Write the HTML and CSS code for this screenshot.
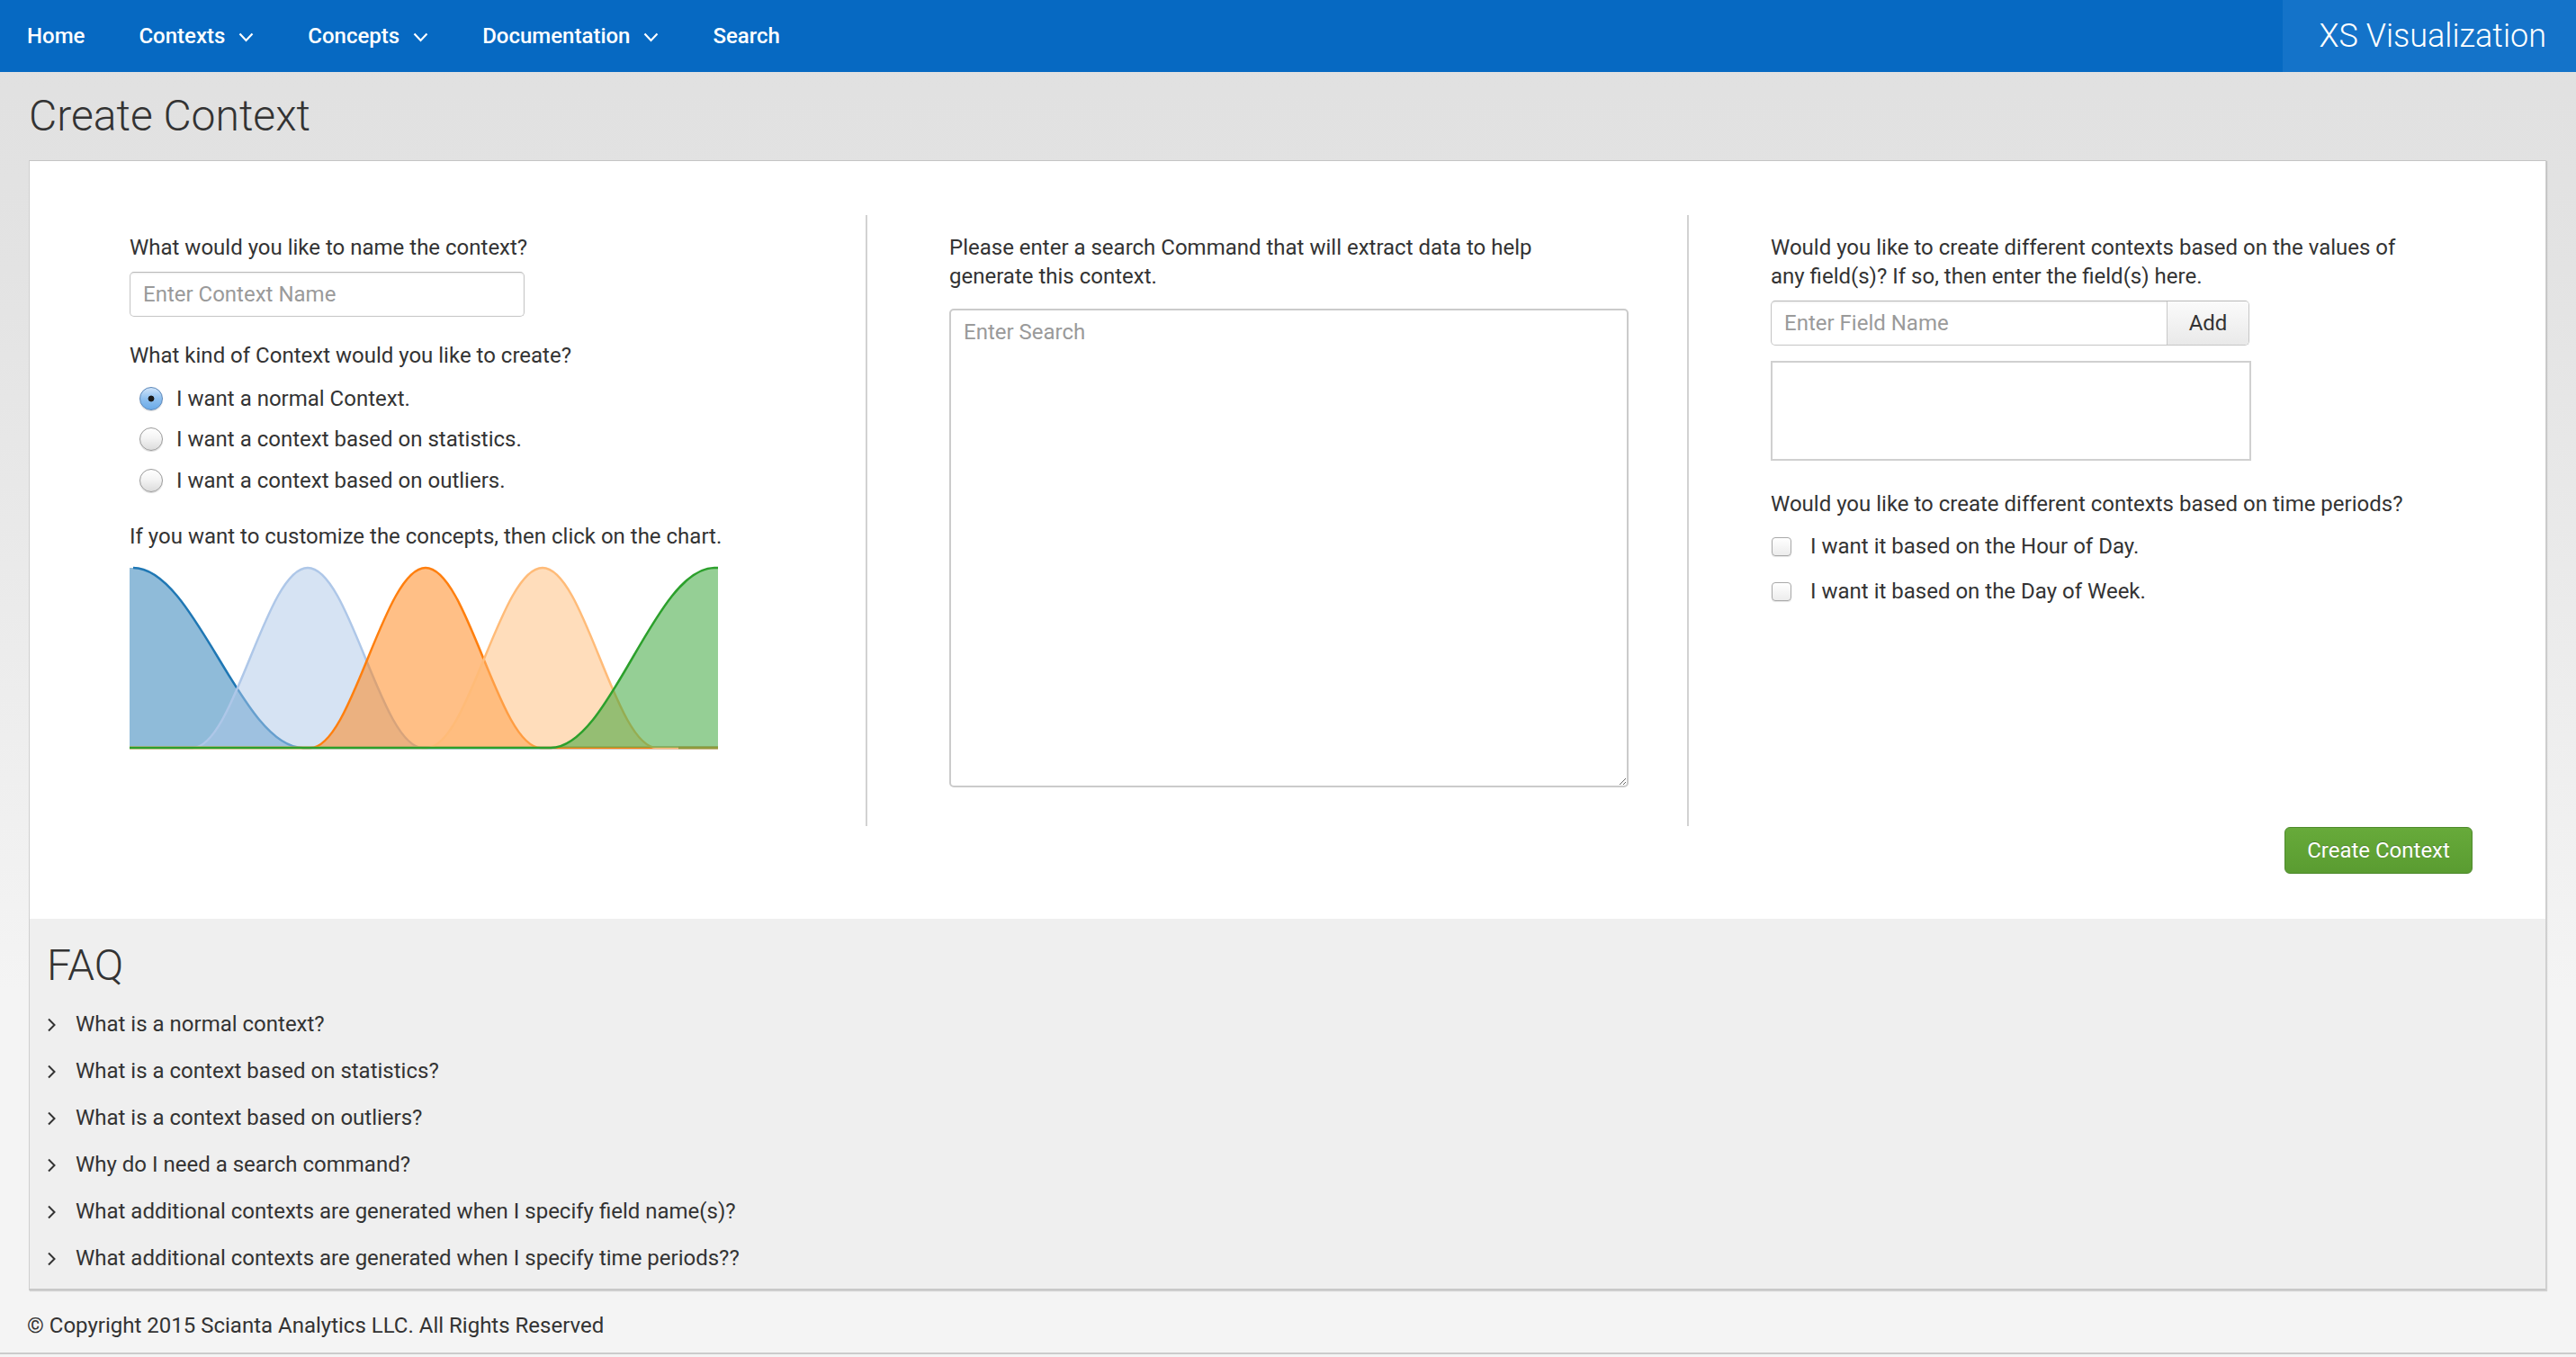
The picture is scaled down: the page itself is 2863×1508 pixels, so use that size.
FILE: index.html
```html
<!DOCTYPE html>
<html lang="en">
<head>
<meta charset="utf-8">
<title>Create Context</title>
<link rel="stylesheet" href="styles.css">
</head>
<body>
<header class="navbar">
  <nav class="nav">
    <a class="nav-item" href="#">Home</a>
    <a class="nav-item" href="#">Contexts<svg class="caret" width="17" height="11" viewBox="0 0 17 11"><polyline points="1.5,1.5 8.5,9 15.5,1.5" fill="none" stroke="#fff" stroke-width="2.2"/></svg></a>
    <a class="nav-item" href="#">Concepts<svg class="caret" width="17" height="11" viewBox="0 0 17 11"><polyline points="1.5,1.5 8.5,9 15.5,1.5" fill="none" stroke="#fff" stroke-width="2.2"/></svg></a>
    <a class="nav-item" href="#">Documentation<svg class="caret" width="17" height="11" viewBox="0 0 17 11"><polyline points="1.5,1.5 8.5,9 15.5,1.5" fill="none" stroke="#fff" stroke-width="2.2"/></svg></a>
    <a class="nav-item" href="#">Search</a>
  </nav>
  <div class="brand">XS Visualization</div>
</header>

<main class="page">
  <h1 class="page-title">Create Context</h1>

  <section class="card">
    <div class="card-main">
      <div class="cols">
        <div class="col col-first">
          <p class="label">What would you like to name the context?</p>
          <input class="text-input name-input" type="text" placeholder="Enter Context Name">
          <p class="label kind-label">What kind of Context would you like to create?</p>
          <label class="choice"><input class="radio" type="radio" name="kind" checked><span>I want a normal Context.</span></label>
          <label class="choice"><input class="radio" type="radio" name="kind"><span>I want a context based on statistics.</span></label>
          <label class="choice"><input class="radio" type="radio" name="kind"><span>I want a context based on outliers.</span></label>
          <p class="label chart-label">If you want to customize the concepts, then click on the chart.</p>
          <svg class="chart" width="654" height="200" viewBox="0 0 654 200">
            <path d="M0,200 L0,0 L4,0 C72.8,0 124.2,200 193,200 L654,200 Z" fill="rgba(31,119,180,0.5)"/>
            <path d="M4,0 C72.8,0 124.2,200 193,200 L654,200" fill="none" stroke="#1f77b4" stroke-width="2.5"/>
            <path d="M0,200 L70,200 C116.6,200 151.4,0 198,0 C244.6,0 279.4,200 326,200 L654,200 Z" fill="rgba(174,199,232,0.5)"/>
            <path d="M0,200 L70,200 C116.6,200 151.4,0 198,0 C244.6,0 279.4,200 326,200 L654,200" fill="none" stroke="#aec7e8" stroke-width="2.5"/>
            <path d="M0,200 L201,200 C247.6,200 282.4,0 329,0 C375.6,0 410.4,200 457,200 L654,200 Z" fill="rgba(255,127,14,0.5)"/>
            <path d="M0,200 L201,200 C247.6,200 282.4,0 329,0 C375.6,0 410.4,200 457,200 L654,200" fill="none" stroke="#ff7f0e" stroke-width="2.5"/>
            <path d="M0,200 L330,200 C377,200 412,0 459,0 C505.3,0 539.7,200 586,200 L654,200 Z" fill="rgba(255,187,120,0.5)"/>
            <path d="M0,200 L330,200 C377,200 412,0 459,0 C505.3,0 539.7,200 586,200 L654,200" fill="none" stroke="#ffbb78" stroke-width="2.5"/>
            <path d="M0,200 L468,200 C534.3,200 583.7,0 650,0 L654,0 L654,200 Z" fill="rgba(44,160,44,0.5)"/>
            <path d="M0,200 L468,200 C534.3,200 583.7,0 650,0 L654,0" fill="none" stroke="#2ca02c" stroke-width="2.5"/>
            <path d="M610,200 L654,200" fill="none" stroke="#8f9a3c" stroke-width="2.5"/>
          </svg>
        </div>

        <div class="col col-div">
          <p class="label">Please enter a search Command that will extract data to help generate this context.</p>
          <textarea class="search-area" placeholder="Enter Search"></textarea>
        </div>

        <div class="col col-div">
          <p class="label">Would you like to create different contexts based on the values of any field(s)? If so, then enter the field(s) here.</p>
          <div class="input-group">
            <input class="group-input" type="text" placeholder="Enter Field Name">
            <button class="add-btn" type="button">Add</button>
          </div>
          <div class="field-list"></div>
          <p class="label time-label">Would you like to create different contexts based on time periods?</p>
          <label class="check-row"><input class="checkbox" type="checkbox"><span>I want it based on the Hour of Day.</span></label>
          <label class="check-row"><input class="checkbox" type="checkbox"><span>I want it based on the Day of Week.</span></label>
        </div>
      </div>
      <div class="actions">
        <button class="create-btn" type="button">Create Context</button>
      </div>
    </div>

    <div class="faq">
      <h2 class="faq-title">FAQ</h2>
      <ul class="faq-list">
        <li class="faq-item"><svg class="chev" width="12" height="16" viewBox="0 0 12 16"><polyline points="2,1.5 8.5,8 2,14.5" fill="none" stroke="#333" stroke-width="2"/></svg>What is a normal context?</li>
        <li class="faq-item"><svg class="chev" width="12" height="16" viewBox="0 0 12 16"><polyline points="2,1.5 8.5,8 2,14.5" fill="none" stroke="#333" stroke-width="2"/></svg>What is a context based on statistics?</li>
        <li class="faq-item"><svg class="chev" width="12" height="16" viewBox="0 0 12 16"><polyline points="2,1.5 8.5,8 2,14.5" fill="none" stroke="#333" stroke-width="2"/></svg>What is a context based on outliers?</li>
        <li class="faq-item"><svg class="chev" width="12" height="16" viewBox="0 0 12 16"><polyline points="2,1.5 8.5,8 2,14.5" fill="none" stroke="#333" stroke-width="2"/></svg>Why do I need a search command?</li>
        <li class="faq-item"><svg class="chev" width="12" height="16" viewBox="0 0 12 16"><polyline points="2,1.5 8.5,8 2,14.5" fill="none" stroke="#333" stroke-width="2"/></svg>What additional contexts are generated when I specify field name(s)?</li>
        <li class="faq-item"><svg class="chev" width="12" height="16" viewBox="0 0 12 16"><polyline points="2,1.5 8.5,8 2,14.5" fill="none" stroke="#333" stroke-width="2"/></svg>What additional contexts are generated when I specify time periods??</li>
      </ul>
    </div>
  </section>
</main>

<footer class="footer">© Copyright 2015 Scianta Analytics LLC. All Rights Reserved</footer>
</body>
</html>
```

FILE: styles.css
```css
* { box-sizing: border-box; }

html, body {
  margin: 0;
  padding: 0;
}

body {
  font-family: Roboto, "Noto Sans", "Liberation Sans", sans-serif;
  font-size: 24px;
  line-height: 32px;
  color: #333;
  background: linear-gradient(to bottom, #e0e0e0 0px, #e3e3e3 300px, #f4f4f4 1100px, #f4f4f4 100%);
  min-height: 1508px;
}

/* ---------- navbar ---------- */
.navbar {
  display: flex;
  height: 80px;
  background: #0669c2;
}

.nav {
  display: flex;
  align-items: center;
  padding-left: 0;
}

.nav-item {
  display: flex;
  align-items: center;
  height: 80px;
  padding: 0 30px 0 30px;
  color: #fff;
  text-decoration: none;
  font-size: 24px;
  font-weight: 500;
}

.caret {
  margin-left: 15px;
  margin-top: 3px;
}

.brand {
  margin-left: auto;
  width: 326px;
  height: 80px;
  background: #1473c9;
  color: #fff;
  font-size: 36px;
  font-weight: 300;
  line-height: 80px;
  text-align: right;
  padding-right: 33px;
}

/* ---------- page ---------- */
.page {
  padding: 0 33px 0 32px;
}

.page-title {
  margin: 0;
  padding: 22px 0 22px 0;
  font-size: 48px;
  line-height: 54px;
  font-weight: 300;
  color: #333;
}

.card {
  background: #fff;
  border: 1px solid #cfcfcf;
  border-top-color: #c4c4c4;
  border-bottom: 2px solid #c8c8c8;
  box-shadow: 1px 1px 1px rgba(0, 0, 0, 0.14);
}

.card-main {
  padding: 60px 0 50px 18px;
}

.cols {
  display: grid;
  grid-template-columns: 911px 913px 913px;
}

.col {
  padding: 20px 95px 43px 93px;
}

.col-div {
  border-left: 2px solid #d2d2d2;
  padding-left: 91px;
}

.label {
  margin: 0;
}

.text-input,
.search-area,
.group-input {
  font-family: Roboto, "Noto Sans", "Liberation Sans", sans-serif;
  font-size: 24px;
  color: #333;
}

.text-input::placeholder,
.search-area::placeholder,
.group-input::placeholder {
  color: #9a9a9a;
}

.name-input {
  display: block;
  margin-top: 11px;
  width: 439px;
  height: 50px;
  padding: 0 14px;
  border: 1px solid #c6c6c6;
  border-top-color: #b9b9b9;
  border-radius: 5px;
  box-shadow: inset 0 1px 2px rgba(0, 0, 0, 0.08);
  outline: none;
}

.kind-label {
  margin-top: 27px;
}

.choice {
  display: flex;
  align-items: center;
  height: 45.5px;
  padding-left: 11px;
}

.choice:first-of-type {
  margin-top: 9px;
}

.choice span {
  margin-left: 15px;
}

.radio {
  -webkit-appearance: none;
  appearance: none;
  margin: 0;
  width: 26px;
  height: 26px;
  border-radius: 50%;
  border: 1px solid #9a9a9a;
  background: linear-gradient(to bottom, #ffffff 0%, #f4f4f4 45%, #dcdcdc 100%);
  box-shadow: 0 1px 1px rgba(0, 0, 0, 0.15);
}

.radio:checked {
  border-color: #5a86b8;
  background: radial-gradient(circle at 50% 50%, #1b1b1b 0, #1b1b1b 3px, transparent 3.8px),
              linear-gradient(to bottom, #cfe4fa 0%, #8fc0ef 50%, #6aaae8 100%);
}

.chart-label {
  margin-top: 23.5px;
}

.chart {
  display: block;
  margin-top: 18.5px;
  overflow: visible;
}

.search-area {
  display: block;
  margin-top: 20px;
  width: 755px;
  height: 532px;
  padding: 8px 14px;
  line-height: 32px;
  border: 2px solid #cbcbcb;
  border-radius: 5px;
  resize: both;
  outline: none;
}

.input-group {
  display: flex;
  margin-top: 11px;
  width: 532px;
  height: 50px;
  border: 1px solid #c6c6c6;
  border-top-color: #b9b9b9;
  border-radius: 5px;
  overflow: hidden;
  box-shadow: inset 0 1px 2px rgba(0, 0, 0, 0.08);
}

.group-input {
  flex: 1;
  min-width: 0;
  border: none;
  padding: 0 14px;
  background: transparent;
  outline: none;
}

.add-btn {
  width: 91px;
  border: none;
  border-left: 1px solid #c8c8c8;
  background: linear-gradient(to bottom, #fbfbfb, #e9e9e9);
  font-family: Roboto, "Noto Sans", "Liberation Sans", sans-serif;
  font-size: 24px;
  color: #333;
  padding: 0;
}

.field-list {
  margin-top: 17px;
  width: 534px;
  height: 111px;
  border: 2px solid #d0d0d0;
}

.time-label {
  margin-top: 32px;
}

.check-row {
  display: flex;
  align-items: center;
  height: 50px;
  padding-left: 1px;
}

.check-row:first-of-type {
  margin-top: 6px;
}

.check-row span {
  margin-left: 21px;
}

.checkbox {
  -webkit-appearance: none;
  appearance: none;
  margin: 0;
  width: 22px;
  height: 21px;
  border: 1px solid #a8a8a8;
  border-radius: 4px;
  background: linear-gradient(to bottom, #ffffff, #ececec);
  box-shadow: 0 1px 1px rgba(0, 0, 0, 0.1);
}

.actions {
  display: flex;
  justify-content: flex-end;
  padding-right: 81px;
  margin-top: 1px;
}

.create-btn {
  width: 209px;
  height: 52px;
  border: 1px solid #4e8a2c;
  border-radius: 6px;
  background: linear-gradient(to bottom, #67aa3a, #5a9c31);
  color: #fff;
  font-family: Roboto, "Noto Sans", "Liberation Sans", sans-serif;
  font-size: 24px;
  text-shadow: 0 -1px 0 rgba(0, 0, 0, 0.25);
  padding: 0;
}

/* ---------- FAQ ---------- */
.faq {
  background: #efefef;
  padding: 25px 19px 8px 19px;
}

.faq-title {
  margin: 0;
  font-size: 48px;
  line-height: 54px;
  font-weight: 300;
  color: #333;
}

.faq-list {
  list-style: none;
  margin: 11.5px 0 0 0;
  padding: 0;
}

.faq-item {
  display: flex;
  align-items: center;
  height: 52px;
}

.chev {
  margin-right: 20px;
  margin-top: 2px;
}

/* ---------- footer ---------- */
.footer {
  padding: 23px 30px 14px 30px;
  border-bottom: 2px solid #cbcbcb;
  line-height: 32px;
}
```
